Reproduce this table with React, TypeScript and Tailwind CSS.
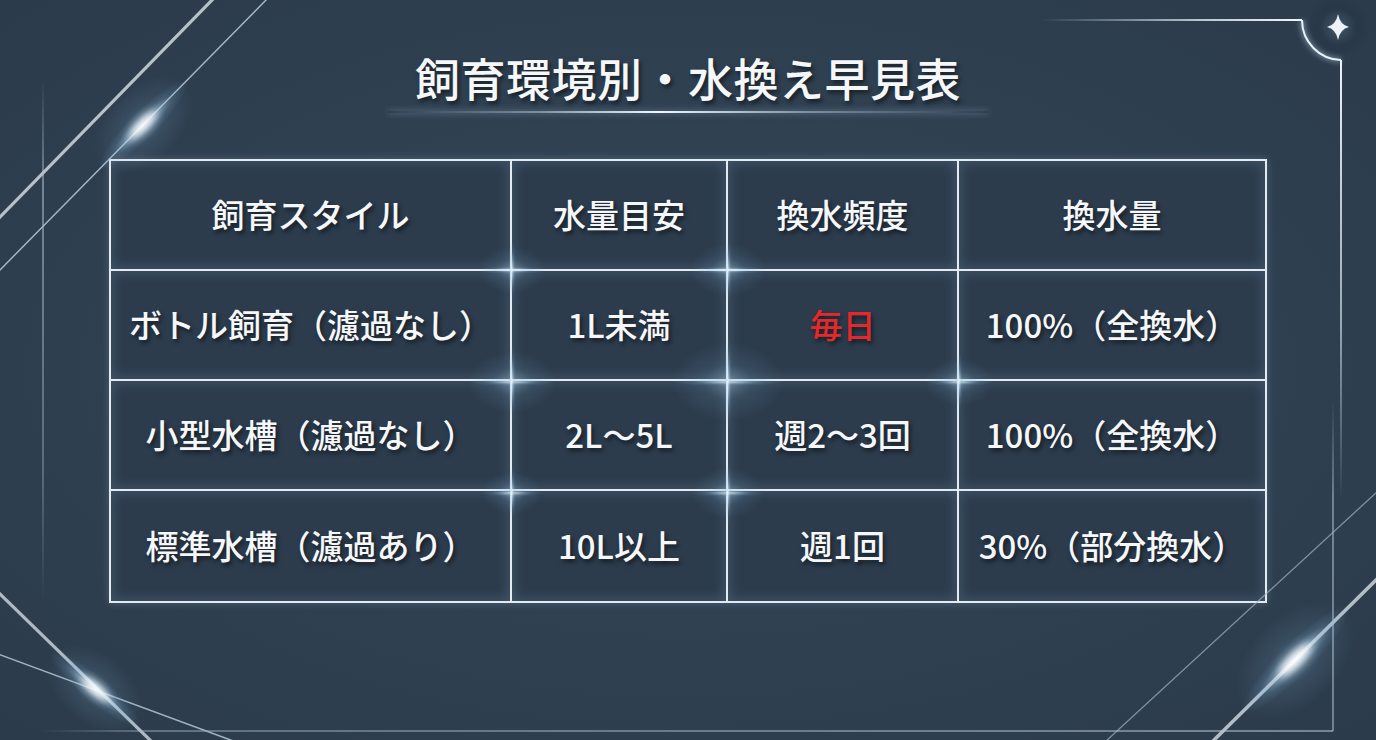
import React from "react";

type Cell = { text: string; red?: boolean };

const COLS = ["飼育スタイル", "水量目安", "換水頻度", "換水量"];

const ROWS: Cell[][] = [
  [{ text: "ボトル飼育（濾過なし）" }, { text: "1L未満" }, { text: "毎日", red: true }, { text: "100%（全換水）" }],
  [{ text: "小型水槽（濾過なし）" }, { text: "2L～5L" }, { text: "週2～3回" }, { text: "100%（全換水）" }],
  [{ text: "標準水槽（濾過あり）" }, { text: "10L以上" }, { text: "週1回" }, { text: "30%（部分換水）" }],
];

// grid crossings that carry a small flare
const FLARES = [
  { x: 512, y: 270, r: 34 },
  { x: 728, y: 270, r: 38 },
  { x: 512, y: 382, r: 44 },
  { x: 728, y: 382, r: 56 },
  { x: 959, y: 382, r: 34 },
  { x: 512, y: 493, r: 30 },
  { x: 728, y: 493, r: 36 },
];

function Flare({ x, y, angle, len }: { x: number; y: number; angle: number; len: number }) {
  return (
    <g transform={`translate(${x} ${y}) rotate(${angle})`}>
      <ellipse cx="0" cy="0" rx={len * 0.95} ry={len * 0.6} fill="url(#soft)" />
      <ellipse cx="0" cy="0" rx={len} ry={len * 0.22} fill="url(#glow)" opacity="0.85" />
      <ellipse
        cx="0"
        cy="0"
        rx={len * 0.28}
        ry={len * 0.08}
        fill="#ffffff"
        opacity="0.85"
        filter="url(#blur4)"
      />
    </g>
  );
}

function Decor() {
  return (
    <svg
      className="pointer-events-none absolute inset-0"
      width={1376}
      height={740}
      viewBox="0 0 1376 740"
    >
      <defs>
        <radialGradient id="glow">
          <stop offset="0" stopColor="#ffffff" stopOpacity="0.95" />
          <stop offset="0.3" stopColor="#cde6fa" stopOpacity="0.6" />
          <stop offset="0.65" stopColor="#86b9de" stopOpacity="0.18" />
          <stop offset="1" stopColor="#86b9de" stopOpacity="0" />
        </radialGradient>
        <radialGradient id="soft">
          <stop offset="0" stopColor="#cfe6f8" stopOpacity="0.35" />
          <stop offset="0.45" stopColor="#8fbde0" stopOpacity="0.12" />
          <stop offset="1" stopColor="#8fbde0" stopOpacity="0" />
        </radialGradient>
        <radialGradient id="halo">
          <stop offset="0" stopColor="#1f2d3b" stopOpacity="0" />
          <stop offset="0.7" stopColor="#233241" stopOpacity="0.35" />
          <stop offset="1" stopColor="#233241" stopOpacity="0" />
        </radialGradient>
        <linearGradient id="topLine" x1="1040" y1="0" x2="1302" y2="0" gradientUnits="userSpaceOnUse">
          <stop offset="0" stopColor="#dbe6ef" stopOpacity="0" />
          <stop offset="0.6" stopColor="#dbe6ef" stopOpacity="0.8" />
          <stop offset="1" stopColor="#f3f8fc" stopOpacity="1" />
        </linearGradient>
        <linearGradient id="leftLine" x1="0" y1="80" x2="0" y2="600" gradientUnits="userSpaceOnUse">
          <stop offset="0" stopColor="#b8c6d2" stopOpacity="0" />
          <stop offset="0.2" stopColor="#b8c6d2" stopOpacity="0.7" />
          <stop offset="0.75" stopColor="#b8c6d2" stopOpacity="0.45" />
          <stop offset="1" stopColor="#b8c6d2" stopOpacity="0" />
        </linearGradient>
        <linearGradient id="rightLine1" x1="0" y1="60" x2="0" y2="500" gradientUnits="userSpaceOnUse">
          <stop offset="0" stopColor="#eef4f9" stopOpacity="1" />
          <stop offset="0.6" stopColor="#c9d6e1" stopOpacity="0.7" />
          <stop offset="1" stopColor="#c9d6e1" stopOpacity="0" />
        </linearGradient>
        <linearGradient id="rightLine2" x1="0" y1="400" x2="0" y2="730" gradientUnits="userSpaceOnUse">
          <stop offset="0" stopColor="#a9b8c5" stopOpacity="0" />
          <stop offset="0.3" stopColor="#a9b8c5" stopOpacity="0.75" />
          <stop offset="1" stopColor="#a9b8c5" stopOpacity="0.75" />
        </linearGradient>
        <linearGradient id="bottomLine" x1="40" y1="0" x2="1333" y2="0" gradientUnits="userSpaceOnUse">
          <stop offset="0" stopColor="#8fa1b0" stopOpacity="0" />
          <stop offset="0.08" stopColor="#8fa1b0" stopOpacity="0.7" />
          <stop offset="1" stopColor="#a9b8c5" stopOpacity="0.8" />
        </linearGradient>
        <filter id="blur2" x="-50%" y="-50%" width="200%" height="200%">
          <feGaussianBlur stdDeviation="2.5" />
        </filter>
        <filter id="blur4" x="-100%" y="-100%" width="300%" height="300%">
          <feGaussianBlur stdDeviation="4" />
        </filter>
      </defs>

      {/* frame */}
      <line x1="43" y1="80" x2="43" y2="600" stroke="url(#leftLine)" strokeWidth="1.5" />
      <line x1="40" y1="731" x2="1333" y2="731" stroke="url(#bottomLine)" strokeWidth="1.5" />
      <path d="M1040 20 L1302 20" stroke="url(#topLine)" strokeWidth="2" fill="none" />
      <path d="M1302 20 A40 40 0 0 0 1341 60" stroke="#f3f8fc" strokeWidth="2" fill="none" />
      <path
        d="M1302 20 A40 40 0 0 0 1341 60"
        stroke="#cfe3f5"
        strokeWidth="6"
        fill="none"
        opacity="0.35"
        filter="url(#blur2)"
      />
      <line x1="1341" y1="60" x2="1341" y2="500" stroke="url(#rightLine1)" strokeWidth="2" />
      <line x1="1333" y1="400" x2="1333" y2="731" stroke="url(#rightLine2)" strokeWidth="1.5" />

      {/* top-left streaks */}
      <line x1="214" y1="-2" x2="-2" y2="219" stroke="#b7c1ca" strokeWidth="3.2" />
      <line x1="268" y1="-2" x2="-2" y2="272" stroke="#a9bccb" strokeWidth="1.4" />
      <Flare x={143} y={125} angle={-45} len={62} />

      {/* bottom-left streaks */}
      <line x1="-2" y1="592" x2="152" y2="742" stroke="#aeb9c3" strokeWidth="3.2" />
      <line x1="-2" y1="654" x2="236" y2="742" stroke="#9fb2c2" strokeWidth="1.6" />
      <Flare x={95} y={689} angle={40} len={58} />

      {/* bottom-right streaks */}
      <line x1="1378" y1="491" x2="1105" y2="742" stroke="#a3b4c3" strokeWidth="1.3" opacity="0.7" />
      <line x1="1378" y1="578" x2="1212" y2="742" stroke="#b2bdc7" strokeWidth="3.5" />
      <Flare x={1295} y={660} angle={-45} len={75} />

      {/* table crossings */}
      {FLARES.map((f, i) => (
        <g key={i}>
          <ellipse cx={f.x} cy={f.y} rx={f.r} ry={f.r * 0.7} fill="url(#soft)" />
          <ellipse cx={f.x} cy={f.y} rx={f.r} ry={4} fill="url(#glow)" opacity="0.7" />
          <ellipse cx={f.x} cy={f.y} rx={4} ry={f.r * 0.9} fill="url(#glow)" opacity="0.7" />
        </g>
      ))}

      {/* sparkle */}
      <circle cx="1338" cy="27" r="32" fill="url(#halo)" />
      <circle cx="1338" cy="27" r="18" fill="url(#soft)" />
      <path
        d="M1338 14 Q1340 25 1349 27 Q1340 29 1338 40 Q1336 29 1327 27 Q1336 25 1338 14 Z"
        fill="#eef2f6"
      />
    </svg>
  );
}

export default function App() {
  const txt =
    "[text-shadow:2px_3px_4px_rgba(0,0,0,0.55)] text-[#f5f7f9] [font-family:'Noto_Sans_CJK_JP','Noto_Sans',sans-serif]";

  return (
    <div className="relative h-[740px] w-[1376px] overflow-hidden bg-[#2f4051] bg-[radial-gradient(ellipse_at_center,#334657_0%,#2f4051_55%,#2b3b4b_100%)]">
      <div className="relative z-10 flex flex-col items-center pt-[55px]">
        <h1 className={`${txt} text-[45px] font-medium leading-none tracking-[0.5px]`}>
          飼育環境別・水換え早見表
        </h1>
        <div className="mt-[11px] h-[2px] w-[600px] bg-[linear-gradient(90deg,rgba(200,220,235,0)_0%,rgba(200,220,235,0.5)_25%,#f2f8fd_45%,rgba(200,220,235,0.5)_70%,rgba(200,220,235,0)_100%)] shadow-[0_0_6px_rgba(190,220,245,0.5)]" />

        <div className="mt-[46px] grid grid-cols-[401px_216px_231px_306px] border-2 border-[#e3eaf1] shadow-[0_0_8px_rgba(180,210,235,0.25)]">
          {COLS.map((c, i) => (
            <div
              key={c}
              className={`flex h-[110px] items-center justify-center border-b-2 border-[#e3eaf1] bg-[#2c3c4d] shadow-[inset_0_0_14px_rgba(160,200,230,0.22)] ${
                i < 3 ? "border-r-2" : ""
              }`}
            >
              <span className={`${txt} text-[33px] font-medium`}>{c}</span>
            </div>
          ))}
          {ROWS.map((row, ri) =>
            row.map((cell, ci) => (
              <div
                key={`${ri}-${ci}`}
                className={`flex h-[110px] items-center justify-center border-[#e3eaf1] bg-[#2c3c4d] shadow-[inset_0_0_14px_rgba(160,200,230,0.22)] ${
                  ci < 3 ? "border-r-2" : ""
                } ${ri < 2 ? "border-b-2" : ""}`}
              >
                <span
                  className={`${txt} text-[33px] font-medium ${
                    cell.red ? "!text-[#e3292c]" : ""
                  }`}
                >
                  {cell.text}
                </span>
              </div>
            ))
          )}
        </div>
      </div>
      <div className="pointer-events-none absolute inset-0 z-20">
        <Decor />
      </div>
    </div>
  );
}
